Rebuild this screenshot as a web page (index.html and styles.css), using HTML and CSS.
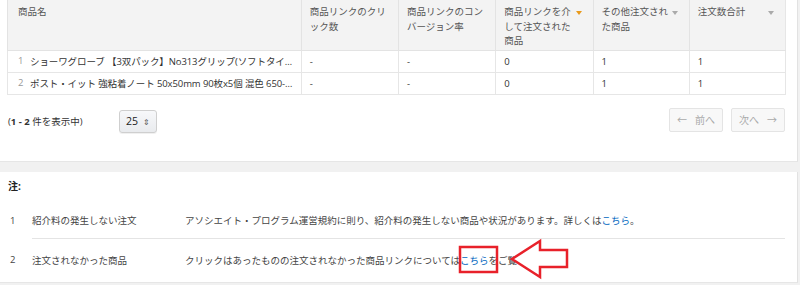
FILE: index.html
```html
<!DOCTYPE html>
<html lang="ja">
<head>
<meta charset="utf-8">
<link rel="stylesheet" href="styles.css">
</head>
<body>
<div class="panel top">
  <table class="report">
    <colgroup>
      <col class="c-name"><col class="c-n"><col class="c-n"><col class="c-n3"><col class="c-n4"><col class="c-n5">
    </colgroup>
    <thead>
      <tr>
        <th class="first">商品名</th>
        <th>商品リンクのクリック数</th>
        <th>商品リンクのコンバージョン率</th>
        <th class="sort"><span>商品リンクを介して注文された商品</span><i class="arr on"></i></th>
        <th class="sort"><span>その他注文された商品</span><i class="arr"></i></th>
        <th class="sort"><span>注文数合計</span><i class="arr"></i></th>
      </tr>
    </thead>
    <tbody>
      <tr>
        <td class="first"><div class="name"><span class="idx">1</span><span class="title">ショーワグローブ 【3双パック】No313グリップ(ソフトタイプ) グレー Lサイズ</span></div></td>
        <td>-</td><td>-</td><td>0</td><td>1</td><td>1</td>
      </tr>
      <tr>
        <td class="first"><div class="name"><span class="idx">2</span><span class="title">ポスト・イット 強粘着ノート 50x50mm 90枚x5個 混色 650-5SSAN</span></div></td>
        <td>-</td><td>-</td><td>0</td><td>1</td><td>1</td>
      </tr>
    </tbody>
  </table>
  <div class="pager">
    <div class="count">(<b>1 - 2</b> 件を表示中)</div>
    <div class="select">25 <span class="updown">&#8661;</span></div>
    <div class="nav">
      <span class="btn">&larr;&nbsp;&nbsp; 前へ</span>
      <span class="btn">次へ &nbsp;&nbsp;&rarr;</span>
    </div>
  </div>
</div>
<div class="panel notes">
  <div class="nhead">注:</div>
  <div class="nrow">
    <span class="nidx">1</span>
    <span class="nlabel">紹介料の発生しない注文</span>
    <span class="ntext">アソシエイト・プログラム運営規約に則り、紹介料の発生しない商品や状況があります。詳しくは<a>こちら</a>。</span>
  </div>
  <div class="nrow last">
    <span class="nidx">2</span>
    <span class="nlabel">注文されなかった商品</span>
    <span class="ntext">クリックはあったものの注文されなかった商品リンクについては<a>こちら</a>をご覧ください。</span>
  </div>
  <svg class="mark" width="130" height="50" viewBox="0 0 130 50">
    <rect x="2" y="9" width="37" height="25" fill="none" stroke="#e8212a" stroke-width="2.5"/>
    <path d="M54 21 L82 3 L82 12 L109 12 L109 29 L82 29 L82 39 Z" fill="#fff" stroke="#e8212a" stroke-width="2.5" stroke-linejoin="miter"/>
  </svg>
</div>
</body>
</html>
```
FILE: styles.css
```css
* { box-sizing: border-box; }
body {
  margin: 0;
  background: #f1f1f1;
  font-family: "Open Sans", "Noto Sans CJK JP", sans-serif;
  font-size: 9.5px;
  color: #333;
  position: relative;
  width: 800px;
  height: 285px;
  overflow: hidden;
}
.panel {
  background: #fff;
  width: 798px;
  border-right: 1px solid #e2e2e2;
  border-bottom: 1px solid #e6e6e6;
}
.top {
  height: 162px;
  padding: 0 12px 0 7px;
}
.report {
  width: 779px;
  border-collapse: collapse;
  table-layout: fixed;
  border: 1px solid #e6e6e6;
  border-top: none;
}
.c-name { width: 293px; }
.c-n { width: 97px; }
.c-n3 { width: 97px; }
.c-n4 { width: 96px; }
.c-n5 { width: 96px; }
th {
  background: #f3f3f3;
  color: #555;
  font-weight: normal;
  text-align: left;
  vertical-align: top;
  padding: 5px 8px 0 8px;
  height: 50px;
  line-height: 14.5px;
  border-left: 1px solid #e3e3e3;
  border-bottom: 1px solid #e3e3e3;
  position: relative;
}
th.first, td.first { padding-left: 10px; }
td.first { padding-right: 6px; }
th.sort { padding-right: 20px; }
.arr {
  position: absolute;
  right: 11px;
  top: 11px;
  width: 0; height: 0;
  border-left: 3.5px solid transparent;
  border-right: 3.5px solid transparent;
  border-top: 4px solid #aaa;
}
.arr.on { border-top-color: #e99a1b; }
td {
  height: 22px;
  padding: 0 8px;
  border-left: 1px solid #e6e6e6;
  border-bottom: 1px solid #e6e6e6;
  white-space: nowrap;
  color: #333;
}
.name { display: flex; gap: 6px; }
.idx { color: #999; width: 6px; flex: none; }
.title { overflow: hidden; text-overflow: ellipsis; white-space: nowrap; min-width: 0; letter-spacing: -0.1px; }
.pager {
  display: flex;
  align-items: center;
  margin-top: 15px;
  padding-left: 1px;
}
.count { width: 111px; color: #333; }
.count b { font-weight: 700; }
.select {
  width: 38px;
  height: 23px;
  border: 1px solid #cfcfcf;
  border-radius: 3px;
  background: linear-gradient(#f7f8fa, #e9ebee);
  box-shadow: 0 1px 0 rgba(0,0,0,0.06);
  display: flex; align-items: center; justify-content: center; gap: 5px;
  font-size: 10.5px;
  color: #222;
}
.updown { font-size: 8px; color: #555; }
.nav { margin-left: auto; display: flex; gap: 8px; margin-top: -3px; }
.btn {
  height: 24px;
  width: 54px;
  border: 1px solid #e4e4e4;
  border-radius: 2px;
  background: #f8f8f8;
  color: #aaa;
  display: flex; align-items: center; justify-content: center;
  font-size: 10px;
}
.notes {
  margin-top: 10px;
  height: 111px;
  padding: 8px 12px 0 8px;
  position: relative;
}
.nhead { font-weight: 700; font-size: 10px; height: 21px; line-height: 12px; color: #222; }
.nrow {
  display: flex;
  align-items: center;
  height: 38px;
  position: relative;
  color: #444;
}
.nrow::after {
  content: "";
  position: absolute;
  left: 24px; right: 0; bottom: 0;
  border-bottom: 1px solid #e4e4e4;
}
.nrow.last::after { display: none; }
.nrow.last { height: 41px; }
.nidx { width: 24px; padding-left: 2px; }
.nlabel { width: 153px; }
.ntext a { color: #0066c0; }
.mark {
  position: absolute;
  left: 458px;
  top: 66px;
}
```
